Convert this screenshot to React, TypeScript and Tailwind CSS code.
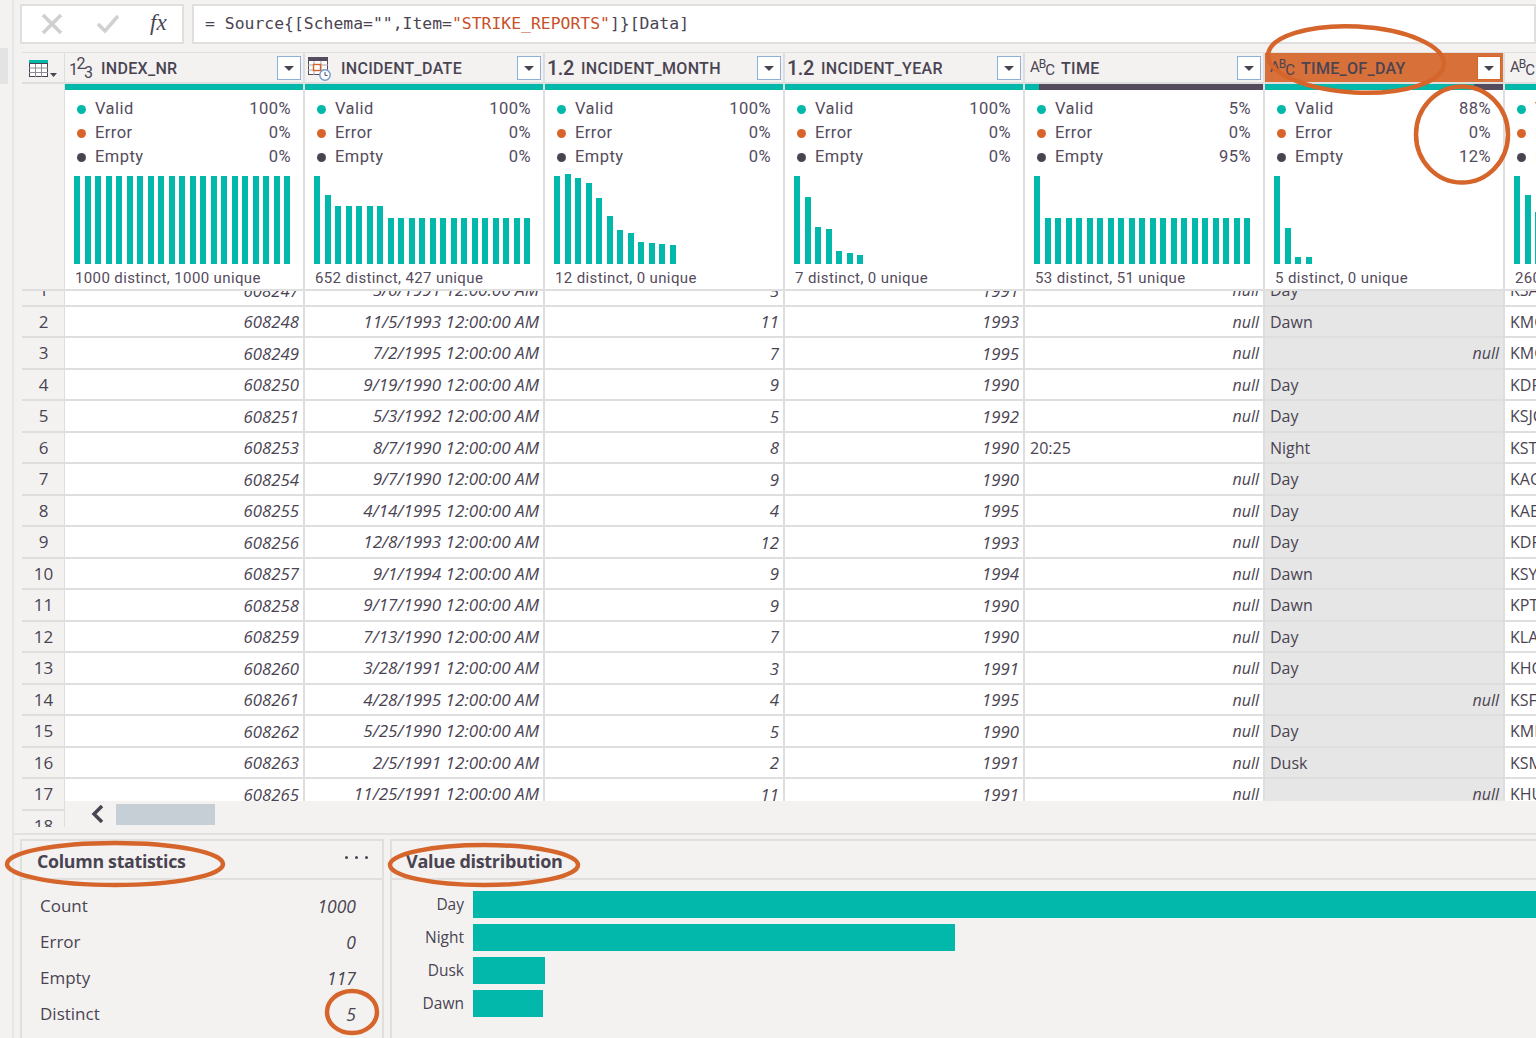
import React from 'react';

const rep = (n: number, v: number) => Array.from({ length: n }, () => v);

const columns = [
  { name: 'INDEX_NR', type: '123', valid: '100%', error: '0%', empty: '0%', validW: 100, bars: rep(21, 88), summary: '1000 distinct, 1000 unique' },
  { name: 'INCIDENT_DATE', type: 'date', valid: '100%', error: '0%', empty: '0%', validW: 100, bars: [88, 69, ...rep(5, 58), ...rep(14, 46)], summary: '652 distinct, 427 unique' },
  { name: 'INCIDENT_MONTH', type: '1.2', valid: '100%', error: '0%', empty: '0%', validW: 100, bars: [88, 90, 86, 81, 66, 48, 34, 31, 22, 21, 20, 19], summary: '12 distinct, 0 unique' },
  { name: 'INCIDENT_YEAR', type: '1.2', valid: '100%', error: '0%', empty: '0%', validW: 100, bars: [88, 67, 37, 35, 13, 11, 9], summary: '7 distinct, 0 unique' },
  { name: 'TIME', type: 'abc', valid: '5%', error: '0%', empty: '95%', validW: 6, bars: [88, ...rep(20, 46)], summary: '53 distinct, 51 unique' },
  { name: 'TIME_OF_DAY', type: 'abc', valid: '88%', error: '0%', empty: '12%', validW: 88, bars: [88, 36, 7, 7], summary: '5 distinct, 0 unique', active: true },
  { name: 'ORIGIN', type: 'abc', valid: '100%', error: '0%', empty: '0%', validW: 100, bars: [88, 69, 52], summary: '260 distinct, 0 unique' },
];

const rows: [string, string, string, string, string, string, string, string][] = [
  ['1', '608247', '5/6/1991 12:00:00 AM', '5', '1991', '', 'Day', 'KSAT'],
  ['2', '608248', '11/5/1993 12:00:00 AM', '11', '1993', '', 'Dawn', 'KMCO'],
  ['3', '608249', '7/2/1995 12:00:00 AM', '7', '1995', '', '', 'KMCI'],
  ['4', '608250', '9/19/1990 12:00:00 AM', '9', '1990', '', 'Day', 'KDFW'],
  ['5', '608251', '5/3/1992 12:00:00 AM', '5', '1992', '', 'Day', 'KSJC'],
  ['6', '608253', '8/7/1990 12:00:00 AM', '8', '1990', '20:25', 'Night', 'KSTL'],
  ['7', '608254', '9/7/1990 12:00:00 AM', '9', '1990', '', 'Day', 'KAGS'],
  ['8', '608255', '4/14/1995 12:00:00 AM', '4', '1995', '', 'Day', 'KAEX'],
  ['9', '608256', '12/8/1993 12:00:00 AM', '12', '1993', '', 'Day', 'KDFW'],
  ['10', '608257', '9/1/1994 12:00:00 AM', '9', '1994', '', 'Dawn', 'KSYR'],
  ['11', '608258', '9/17/1990 12:00:00 AM', '9', '1990', '', 'Dawn', 'KPTK'],
  ['12', '608259', '7/13/1990 12:00:00 AM', '7', '1990', '', 'Day', 'KLAX'],
  ['13', '608260', '3/28/1991 12:00:00 AM', '3', '1991', '', 'Day', 'KHOU'],
  ['14', '608261', '4/28/1995 12:00:00 AM', '4', '1995', '', '', 'KSFO'],
  ['15', '608262', '5/25/1990 12:00:00 AM', '5', '1990', '', 'Day', 'KMIA'],
  ['16', '608263', '2/5/1991 12:00:00 AM', '2', '1991', '', 'Dusk', 'KSMF'],
  ['17', '608265', '11/25/1991 12:00:00 AM', '11', '1991', '', '', 'KHUF'],
];

function TypeIcon({ type }: { type: string }) {
  if (type === 'date') {
    return (
      <svg width="26" height="26" viewBox="0 0 26 26" className="shrink-0 ml-[2px]">
        <rect x="1" y="2" width="20" height="4" fill="#544b5c" />
        <rect x="1.500" y="5.500" width="19" height="14" fill="#fff" stroke="#544b5c" />
        <path d="M1 10h20M1 15h20M7 6v14M14 6v14" stroke="#a9a5ad" />
        <rect x="6.500" y="9.500" width="7" height="6" fill="#fff" stroke="#d5652a" strokeWidth="1.400" />
        <circle cx="18" cy="20" r="5.200" fill="#fff" stroke="#6f9bd1" strokeWidth="1.400" />
        <path d="M18 17v3.400h2.600" fill="none" stroke="#544b5c" />
      </svg>
    );
  }
  if (type === '1.2') {
    return <span className="pl-[2px] text-[20px] font-medium leading-none tracking-[-0.5px] text-[#4a4452] font-['Roboto',sans-serif]">1.2</span>;
  }
  if (type === '123') {
    return (
      <span className="pl-[4px] text-[16px] leading-none tracking-[-1.500px] text-[#4a4452] font-['Roboto',sans-serif]">
        1<span className="align-[6px]">2</span><span className="align-[-3px]">3</span>
      </span>
    );
  }
  return (
    <span className="pl-[5px] text-[15px] leading-none tracking-[-1px] text-[#4a4452] font-['Roboto',sans-serif]">
      A<span className="text-[12px] align-[4px]">B</span><span className="align-[-3px]">C</span>
    </span>
  );
}

function HeaderCell({ col }: { col: (typeof columns)[number] }) {
  return (
    <div className={`w-[240px] h-[31px] pt-[1px] shrink-0 flex items-center border-r-2 border-b-2 border-[#dedede] ${col.active ? 'bg-[#d8703a]' : 'bg-[#f3f2f1]'}`}>
      <div className="w-[36px] shrink-0 flex items-center"><TypeIcon type={col.type} /></div>
      <span className="flex-1 mt-[1px] text-[16px] font-medium text-[#4a4452] tracking-[0.3px] font-['Roboto',sans-serif]">{col.name}</span>
      <div className={`w-[24px] h-[24px] mr-[2px] flex items-center justify-center bg-white border ${col.active ? 'border-[#d5652a]' : 'border-[#8fb0d8]'}`}>
        <div className="w-0 h-0 border-l-[5px] border-r-[5px] border-t-[5px] border-l-transparent border-r-transparent border-t-[#4a4452]" />
      </div>
    </div>
  );
}

function StatLine({ color, label, value }: { color: string; label: string; value: string }) {
  return (
    <div className="h-[24px] flex items-center pl-[12px] pr-[12px]">
      <div className={`w-[9px] h-[9px] rounded-full ${color}`} />
      <span className="ml-[9px] flex-1">{label}</span>
      <span>{value}</span>
    </div>
  );
}

function ProfileCell({ col }: { col: (typeof columns)[number] }) {
  return (
    <div className="w-[240px] h-[207px] shrink-0 bg-white border-r-2 border-b-2 border-[#dedede] text-[16.500px] text-[#544b5c] tracking-[0.45px] font-['Roboto',sans-serif]">
      <div className="h-[6px] flex bg-[#544b5c]">
        <div className="bg-[#01b8aa]" style={{ width: `${col.validW}%` }} />
      </div>
      <div className="mt-[7px]">
        <StatLine color="bg-[#01b8aa]" label="Valid" value={col.valid} />
        <StatLine color="bg-[#d5652a]" label="Error" value={col.error} />
        <StatLine color="bg-[#4a4452]" label="Empty" value={col.empty} />
      </div>
      <div className="mt-[5px] h-[90px] pl-[9px] flex items-end gap-[4.500px]">
        {col.bars.map((h, i) => (
          <div key={i} className="w-[6px] bg-[#01b8aa]" style={{ height: h }} />
        ))}
      </div>
      <div className="mt-[4px] h-[20px] pl-[10px] leading-[20px] text-[15px] tracking-[0.38px] whitespace-nowrap">{col.summary}</div>
    </div>
  );
}

function DataRow({ row }: { row: (typeof rows)[number] }) {
  const cell = 'w-[240px] shrink-0 h-full pt-[1px] border-r-2 border-[#dedede] flex items-center whitespace-nowrap overflow-hidden';
  const num = `${cell} justify-end pr-[4px] italic text-[16.800px] bg-white`;
  const nul = `${cell} justify-end pr-[4px] italic`;
  return (
    <div className="h-[31.500px] flex border-b-2 border-[#dedede] text-[16px] text-[#4a4452] font-['Open_Sans',sans-serif]">
      <div className={num}>{row[1]}</div>
      <div className={`${cell} justify-end pr-[4px] italic text-[17.100px] bg-white`}>{row[2]}</div>
      <div className={num}>{row[3]}</div>
      <div className={num}>{row[4]}</div>
      {row[5] ? <div className={`${cell} pl-[5px] bg-white`}>{row[5]}</div> : <div className={`${nul} bg-white`}>null</div>}
      {row[6] ? (
        <div className={`${cell} pl-[5px] bg-[#e6e6e6]`}>{row[6]}</div>
      ) : (
        <div className={`${nul} bg-[#e6e6e6]`}>null</div>
      )}
      <div className={`${cell} pl-[5px] bg-white`}>{row[7]}</div>
    </div>
  );
}

function TableIcon() {
  return (
    <svg width="28" height="18" viewBox="0 0 28 18">
      <rect x="0" y="0" width="19" height="4" fill="#01b8aa" />
      <rect x="0.500" y="3.500" width="18" height="13" fill="#fff" stroke="#4a4452" />
      <path d="M0 8h19M0 12.500h19M6.500 4v13M12.500 4v13" stroke="#8f8b94" />
      <path d="M21 13h7l-3.500 4z" fill="#4a4452" />
    </svg>
  );
}

function StatRow({ label, value }: { label: string; value: string }) {
  return (
    <div className="h-[36px] flex items-center justify-between pl-[18px] pr-[26px]">
      <span>{label}</span>
      <i className="text-[17.500px]">{value}</i>
    </div>
  );
}

const dist = [
  { label: 'Day', w: 1100 },
  { label: 'Night', w: 482 },
  { label: 'Dusk', w: 72 },
  { label: 'Dawn', w: 70 },
];

export default function App() {
  return (
    <div className="relative w-[1536px] h-[1038px] overflow-hidden flex bg-[#f3f2f1] text-[#4a4452]">
      <div className="w-[14px] shrink-0 border-r-2 border-[#e6e6e6]">
        <div className="mt-[48px] w-[8px] h-[36px] bg-[#e3e3e3]" />
      </div>
      <div className="flex-1 min-w-0 flex flex-col">
        <div className="mt-[4px] h-[40px] pl-[6px] flex gap-[8px]">
          <div className="w-[164px] h-full bg-white border-2 border-[#e1dfdd] flex items-center">
            <svg width="24" height="24" viewBox="0 0 24 24" className="ml-[18px]">
              <path d="M3 3l18 18M21 3L3 21" stroke="#d0d0d0" strokeWidth="3.500" />
            </svg>
            <svg width="24" height="20" viewBox="0 0 24 20" className="ml-[32px]">
              <path d="M2 10l7 7L22 2" fill="none" stroke="#d0d0d0" strokeWidth="3.500" />
            </svg>
            <span className="ml-[30px] -mt-[3px] text-[23px] italic leading-none text-[#4a4452] font-['Liberation_Serif',serif]">fx</span>
          </div>
          <div className="flex-1 h-full pt-[1px] bg-white border-2 border-[#e1dfdd] flex items-center pl-[11px] text-[16.410px] text-[#4a4452] whitespace-pre font-['DejaVu_Sans_Mono',monospace]">
            {'= Source{[Schema="",Item='}
            <span className="text-[#c8502a]">{'"STRIKE_REPORTS"'}</span>
            {']}[Data]'}
          </div>
        </div>

        <div className="mt-[8px] ml-[8px] h-[775px] flex overflow-hidden border-t border-[#e1dfdd]">
          <div className="w-[43px] shrink-0 border-r border-[#dedede] overflow-hidden">
            <div className="h-[31px] pt-[2px] pr-[1px] flex items-center justify-center border-b-2 border-[#dedede]"><TableIcon /></div>
            <div className="h-[207px] border-b-2 border-[#dedede]" />
            <div className="h-[536px] overflow-hidden">
              <div className="-mt-[16px] text-[17px] text-center font-['Open_Sans',sans-serif]">
                {[...rows.map((r) => r[0]), '18'].map((n) => (
                  <div key={n} className="h-[31.500px] leading-[29.500px] pl-[1px] border-b-2 border-[#dedede]">{n}</div>
                ))}
              </div>
            </div>
          </div>
          <div className="flex-1 min-w-0 overflow-hidden">
            <div className="flex w-[1680px]">
              {columns.map((c) => <HeaderCell key={c.name} col={c} />)}
            </div>
            <div className="flex w-[1680px]">
              {columns.map((c) => <ProfileCell key={c.name} col={c} />)}
            </div>
            <div className="h-[510px] w-[1680px] overflow-hidden">
              <div className="-mt-[16px]">
                {rows.map((r) => <DataRow key={r[0]} row={r} />)}
              </div>
            </div>
            <div className="h-[26px] flex items-center">
              <svg width="16" height="18" viewBox="0 0 16 18" className="ml-[25px]">
                <path d="M12 1L4 9l8 8" fill="none" stroke="#4a4452" strokeWidth="3.500" />
              </svg>
              <div className="ml-[10px] w-[99px] h-[21px] bg-[#c6ced6]" />
            </div>
          </div>
        </div>

        <div className="mt-[6px] border-t-2 border-[#e1e1e1]" />

        <div className="mt-[4px] flex-1 min-h-0 pl-[6px] flex gap-[6px]">
          <div className="w-[364px] border-2 border-b-0 border-[#e1dfdd]">
            <div className="h-[39px] flex items-center justify-between pl-[15px] pr-[14px] border-b-2 border-[#e1dfdd]">
              <span className="mt-[3px] text-[17.800px] font-bold tracking-[-0.3px] font-['Open_Sans',sans-serif]">Column statistics</span>
              <span className="-mt-[4px] flex gap-[7px]">
                <span className="w-[3px] h-[3px] rounded-full bg-[#4a4452]" />
                <span className="w-[3px] h-[3px] rounded-full bg-[#4a4452]" />
                <span className="w-[3px] h-[3px] rounded-full bg-[#4a4452]" />
              </span>
            </div>
            <div className="pt-[8px] text-[17px] font-['Open_Sans',sans-serif]">
              <StatRow label="Count" value="1000" />
              <StatRow label="Error" value="0" />
              <StatRow label="Empty" value="117" />
              <StatRow label="Distinct" value="5" />
            </div>
          </div>
          <div className="flex-1 min-w-0 border-2 border-r-0 border-b-0 border-[#e1dfdd] overflow-hidden">
            <div className="h-[39px] pt-[3px] flex items-center pl-[14px] border-b-2 border-[#e1dfdd] text-[18px] font-bold tracking-[-0.3px] font-['Open_Sans',sans-serif]">
              Value distribution
            </div>
            <div className="pt-[11px] flex flex-col gap-[6px]">
              {dist.map((d) => (
                <div key={d.label} className="h-[27px] flex items-center">
                  <span className="w-[72px] shrink-0 text-right text-[15.500px] font-['Open_Sans',sans-serif]">{d.label}</span>
                  <div className="ml-[9px] h-full bg-[#01b8aa]" style={{ width: d.w }} />
                </div>
              ))}
            </div>
          </div>
        </div>
      </div>

      {/* hand drawn call-outs over the screenshot */}
      <svg className="absolute left-0 top-0 pointer-events-none" width="1536" height="1038" fill="none" stroke="#d5652a" strokeWidth="4.500">
        <ellipse cx="1356" cy="59.500" rx="88" ry="33" transform="rotate(3 1356 59.500)" />
        <ellipse cx="1462" cy="134.500" rx="46" ry="48" />
        <ellipse cx="115" cy="864" rx="108" ry="21" />
        <ellipse cx="484" cy="865" rx="94" ry="20" />
        <ellipse cx="352" cy="1012" rx="25" ry="21" />
      </svg>
    </div>
  );
}
